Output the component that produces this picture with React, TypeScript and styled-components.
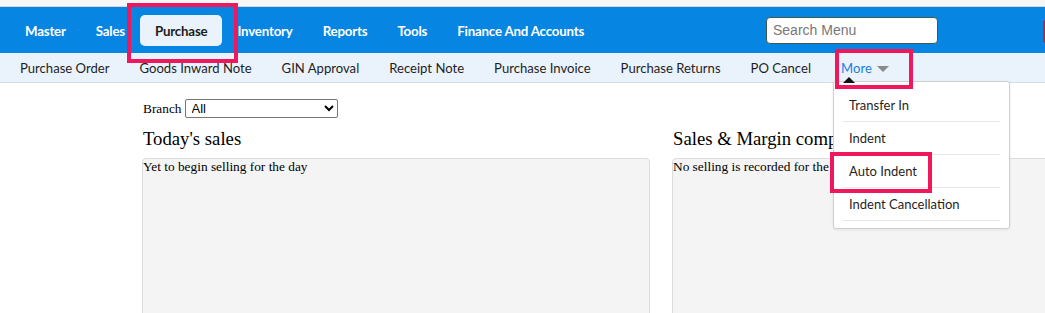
import { createGlobalStyle, styled } from 'styled-components';

const GlobalStyle = createGlobalStyle`
  html, body {
    margin: 0;
    padding: 0;
    background: #ffffff;
    overflow: hidden;
  }
  body {
    font-family: 'Liberation Serif', 'Times New Roman', serif;
  }
`;

const Page = styled.div`
  position: relative;
  width: 1045px;
  height: 313px;
  overflow: hidden;
`;

const TopStrip = styled.div`
  height: 6px;
  background: #f7f7f7;
  border-bottom: 1px solid #d6d6d6;
`;

const MainNav = styled.nav`
  position: relative;
  display: flex;
  align-items: center;
  height: 46px;
  padding-left: 10px;
  background: #0685e3;
`;

type NavItemProps = {
  $active?: boolean;
};

const NavItem = styled.a<NavItemProps>`
  display: flex;
  align-items: center;
  height: 31px;
  margin-top: 1px;
  padding: 0 15px;
  border-radius: 5px;
  font-family: Lato, 'Noto Sans', sans-serif;
  font-weight: 700;
  font-size: 13.3px;
  letter-spacing: -0.2px;
  color: ${({ $active }) => ($active ? '#1c1c1c' : '#ffffff')};
  background: ${({ $active }) => ($active ? '#eaf2fb' : 'transparent')};
`;

const SearchBox = styled.input`
  margin-left: auto;
  margin-right: 107px;
  width: 172px;
  height: 27px;
  box-sizing: border-box;
  padding: 0 6px;
  border: 1px solid #3d5a4a;
  border-radius: 4px;
  background: #ffffff;
  font-family: 'Liberation Sans', Arial, sans-serif;
  font-size: 14px;
  &::placeholder {
    color: #777777;
  }
`;

const LogoutStub = styled.div`
  position: absolute;
  right: -40px;
  top: 13px;
  width: 42px;
  height: 23px;
  border-radius: 3px;
  background: #c1272d;
`;

const SubNav = styled.nav`
  position: relative;
  display: flex;
  align-items: center;
  height: 29px;
  padding-left: 5px;
  background: #eaf2fb;
  border-bottom: 1px solid #d5dde6;
`;

type SubItemProps = {
  $accent?: boolean;
};

const SubItem = styled.a<SubItemProps>`
  display: flex;
  align-items: center;
  gap: 5px;
  padding: 0 15px;
  font-family: Lato, 'Noto Sans', sans-serif;
  font-size: 13.1px;
  color: ${({ $accent }) => ($accent ? '#1a7fe0' : '#1f1f1f')};
`;

const Caret = styled.span`
  display: inline-block;
  width: 0;
  height: 0;
  margin-top: 2px;
  border-left: 6px solid transparent;
  border-right: 6px solid transparent;
  border-top: 6px solid #8a8a8a;
`;

const Content = styled.main`
  padding: 16px 0 0 142px;
`;

const BranchRow = styled.div`
  display: flex;
  align-items: center;
  gap: 3px;
  margin-left: 1px;
  font-size: 13.33px;
  color: #000000;
`;

const BranchSelect = styled.select`
  width: 153px;
  height: 19px;
  padding: 0 2px;
  border: 1px solid #767676;
  border-radius: 2px;
  background: #ffffff;
  font-family: 'Liberation Sans', Arial, sans-serif;
  font-size: 13px;
  color: #000000;
`;

const Columns = styled.div`
  display: grid;
  grid-template-columns: 508px 500px;
  column-gap: 22px;
  margin-top: 10px;
`;

const Panel = styled.section`
  display: flex;
  flex-direction: column;
`;

const PanelTitle = styled.h3`
  margin: 0 0 8px 1px;
  font-weight: 400;
  font-size: 18.72px;
  line-height: 22px;
  color: #000000;
`;

const PanelBody = styled.div`
  height: 170px;
  padding: 0;
  border: 1px solid #dcdcdc;
  border-radius: 4px;
  background: #f4f4f4;
  font-size: 13.33px;
  line-height: 16px;
  color: #000000;
`;

const Dropdown = styled.div`
  position: absolute;
  left: 833px;
  top: 81px;
  width: 177px;
  padding: 7px 9px 7px;
  box-sizing: border-box;
  border: 1px solid #cfcfcf;
  border-radius: 3px;
  background: #ffffff;
  box-shadow: 0 1px 3px rgba(0, 0, 0, 0.08);
`;

const DropArrow = styled.span`
  position: absolute;
  left: 9px;
  top: -5px;
  width: 0;
  height: 0;
  border-left: 6px solid transparent;
  border-right: 6px solid transparent;
  border-bottom: 6px solid #111111;
`;

const DropItem = styled.a`
  display: flex;
  align-items: center;
  height: 32px;
  padding-left: 6px;
  border-bottom: 1px solid #e6e6e6;
  font-family: Lato, 'Noto Sans', sans-serif;
  font-size: 13px;
  color: #1f1f1f;
`;

type MarkProps = {
  $left: number;
  $top: number;
  $width: number;
  $height: number;
};

const Highlight = styled.div<MarkProps>`
  position: absolute;
  left: ${({ $left }) => $left}px;
  top: ${({ $top }) => $top}px;
  width: ${({ $width }) => $width}px;
  height: ${({ $height }) => $height}px;
  box-sizing: border-box;
  border: 4px solid #f0185c;
  pointer-events: none;
`;

const mainItems = ['Master', 'Sales', 'Purchase', 'Inventory', 'Reports', 'Tools', 'Finance And Accounts'];
const subItems = ['Purchase Order', 'Goods Inward Note', 'GIN Approval', 'Receipt Note', 'Purchase Invoice', 'Purchase Returns', 'PO Cancel'];
const moreItems = ['Transfer In', 'Indent', 'Auto Indent', 'Indent Cancellation'];

export default function App() {
  return (
    <Page>
      <GlobalStyle />
      <TopStrip />
      <MainNav>
        {mainItems.map((item) => (
          <NavItem key={item} $active={item === 'Purchase'}>
            {item}
          </NavItem>
        ))}
        <SearchBox placeholder="Search Menu" />
        <LogoutStub />
      </MainNav>
      <SubNav>
        {subItems.map((item) => (
          <SubItem key={item}>{item}</SubItem>
        ))}
        <SubItem $accent>
          More
          <Caret />
        </SubItem>
      </SubNav>
      <Content>
        <BranchRow>
          Branch
          <BranchSelect defaultValue="All">
            <option>All</option>
          </BranchSelect>
        </BranchRow>
        <Columns>
          <Panel>
            <PanelTitle>Today's sales</PanelTitle>
            <PanelBody>Yet to begin selling for the day</PanelBody>
          </Panel>
          <Panel>
            <PanelTitle>Sales &amp; Margin comparison</PanelTitle>
            <PanelBody>No selling is recorded for the selected period</PanelBody>
          </Panel>
        </Columns>
      </Content>
      <Dropdown>
        <DropArrow />
        {moreItems.map((item) => (
          <DropItem key={item}>{item}</DropItem>
        ))}
      </Dropdown>
      <Highlight $left={127} $top={3} $width={111} $height={60} />
      <Highlight $left={835} $top={49} $width={78} $height={40} />
      <Highlight $left={830} $top={152} $width={102} $height={41} />
    </Page>
  );
}
